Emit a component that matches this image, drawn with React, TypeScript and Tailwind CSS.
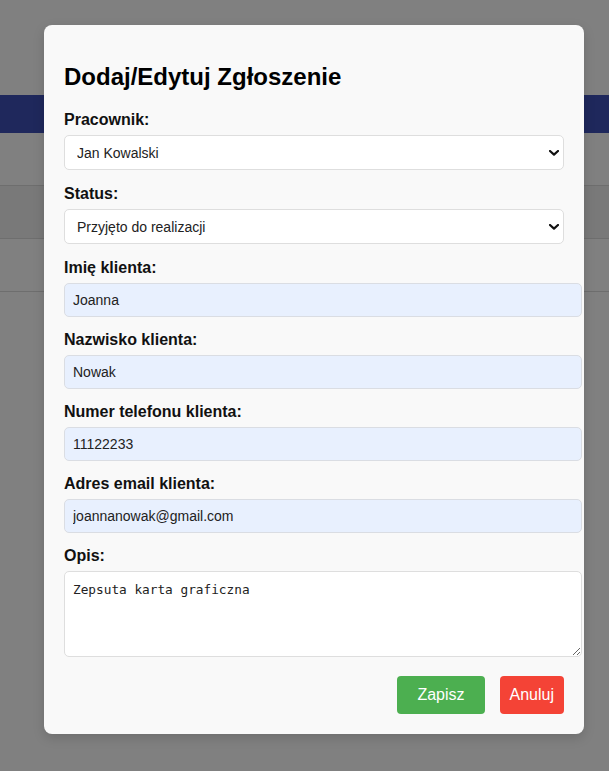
import React, { useState } from 'react';

const sans = { fontFamily: '"Liberation Sans", Arial, sans-serif' };

const Chevron = () => (
  <svg
    width="10"
    height="6"
    viewBox="0 0 10 6"
    className="pointer-events-none absolute right-[5px] top-1/2 -translate-y-1/2"
  >
    <polyline points="1,1 5,4.6 9,1" fill="none" stroke="#111" strokeWidth="2.2" strokeLinecap="round" strokeLinejoin="round" />
  </svg>
);

const SelectField = ({ label, value, options }: { label: string; value: string; options: string[] }) => {
  const [val, setVal] = useState(value);
  return (
    <div className="mb-[15px]">
      <label className="mb-[6px] block text-[16px] font-bold leading-[18px] text-[#111]">{label}</label>
      <div className="relative w-full">
        <select
          value={val}
          onChange={(e) => setVal(e.target.value)}
          className="block h-[35px] w-full appearance-none rounded-[5px] border border-[#dedede] bg-white pl-[12px] pr-6 text-[14px] leading-[16px] text-[#222] outline-none"
          style={sans}
        >
          {options.map((o) => (
            <option key={o}>{o}</option>
          ))}
        </select>
        <Chevron />
      </div>
    </div>
  );
};

const InputField = ({ label, value }: { label: string; value: string }) => {
  const [val, setVal] = useState(value);
  return (
    <div className="mb-[14px]">
      <label className="mb-[6px] block text-[16px] font-bold leading-[18px] text-[#111]">{label}</label>
      <input
        value={val}
        onChange={(e) => setVal(e.target.value)}
        className="box-content block h-[16px] w-full rounded-[5px] border border-[#dadde3] bg-[#e8f0fe] px-2 py-2 text-[14px] leading-[16px] text-[#222] outline-none"
        style={sans}
      />
    </div>
  );
};

const App = () => {
  const [opis, setOpis] = useState('Zepsuta karta graficzna');

  return (
    <div className="relative h-screen w-full overflow-hidden bg-[#808080]" style={sans}>
      {/* strona pod nakładką */}
      <div className="h-[95px]" />
      <div className="h-[38px] bg-[#1f285c]" />
      <div className="h-[53px] border-b border-[#6e6e6e]" />
      <div className="h-[53px] border-b border-[#6e6e6e] bg-[#797979]" />
      <div className="h-[53px] border-b border-[#6e6e6e]" />

      {/* modal */}
      <div className="absolute left-[44px] top-[25px] w-[540px] rounded-[8px] bg-[#f9f9f9] px-5 pb-5 pt-[38px] shadow-[0_4px_12px_rgba(0,0,0,0.15)]">
        <h2 className="mb-5 text-[24px] font-bold leading-[28px] text-[#000]">Dodaj/Edytuj Zgłoszenie</h2>

        <SelectField label="Pracownik:" value="Jan Kowalski" options={['Jan Kowalski', 'Anna Nowak']} />
        <SelectField
          label="Status:"
          value="Przyjęto do realizacji"
          options={['Przyjęto do realizacji', 'W trakcie', 'Zakończone']}
        />
        <InputField label="Imię klienta:" value="Joanna" />
        <InputField label="Nazwisko klienta:" value="Nowak" />
        <InputField label="Numer telefonu klienta:" value="11122233" />
        <InputField label="Adres email klienta:" value="joannanowak@gmail.com" />

        <div>
          <label className="mb-[6px] block text-[16px] font-bold leading-[18px] text-[#111]">Opis:</label>
          <textarea
            value={opis}
            onChange={(e) => setOpis(e.target.value)}
            className="box-content block h-[66px] w-full rounded-[5px] border border-[#dedede] bg-white px-2 pb-2 pt-[10px] text-[12.75px] leading-[16px] text-[#222] outline-none"
            style={{ fontFamily: '"DejaVu Sans Mono", monospace' }}
          />
        </div>

        <div className="mt-[19px] flex justify-end gap-[15px]">
          <button className="h-[38px] rounded-[4px] bg-[#4caf50] px-5 text-[16px] leading-[18px] text-white">Zapisz</button>
          <button className="h-[38px] rounded-[4px] bg-[#f44336] px-[10px] text-[16px] leading-[18px] text-white">Anuluj</button>
        </div>
      </div>
    </div>
  );
};

export default App;
